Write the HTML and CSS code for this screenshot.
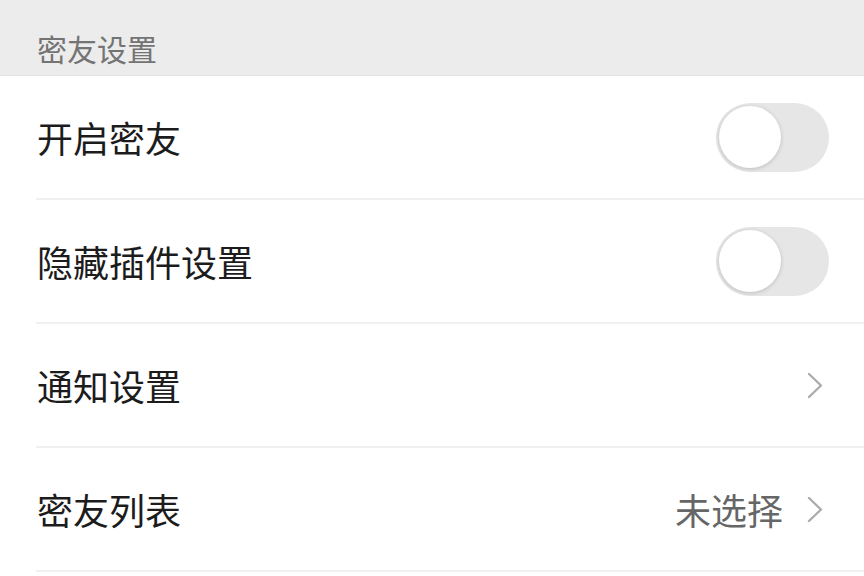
FILE: index.html
```html
<!DOCTYPE html>
<html lang="zh-CN">
<head>
  <meta charset="UTF-8" />
  <title>密友设置</title>
  <link rel="stylesheet" href="styles.css">
</head>
<body>
  <div class="section-title">密友设置</div>
  <div class="list">
    <div class="row">
      <span class="label">开启密友</span>
      <span class="switch"><span class="knob"></span></span>
    </div>
    <div class="row">
      <span class="label">隐藏插件设置</span>
      <span class="switch"><span class="knob"></span></span>
    </div>
    <div class="row">
      <span class="label">通知设置</span>
      <span class="extra">
        <svg class="chevron" viewBox="0 0 16 27" width="16" height="27"><path d="M2 2 L14 13.5 L2 25" fill="none" stroke="#acacac" stroke-width="2.4" stroke-linecap="round" stroke-linejoin="round"/></svg>
      </span>
    </div>
    <div class="row">
      <span class="label">密友列表</span>
      <span class="extra">
        <span class="value">未选择</span>
        <svg class="chevron" viewBox="0 0 16 27" width="16" height="27"><path d="M2 2 L14 13.5 L2 25" fill="none" stroke="#acacac" stroke-width="2.4" stroke-linecap="round" stroke-linejoin="round"/></svg>
      </span>
    </div>
  </div>
</body>
</html>
```

FILE: styles.css
```css
body {
  margin: 0;
  background: #ffffff;
  font-family: "Noto Sans CJK SC", "Noto Sans", sans-serif;
}

.section-title {
  height: 76px;
  box-sizing: border-box;
  background: #ececec;
  color: #747474;
  font-size: 30px;
  line-height: 30px;
  padding: 33px 0 0 37px;
  border-bottom: 1px solid #e2e2e2;
}

.list {
  padding-left: 36px;
}

.row {
  height: 122px;
  display: flex;
  align-items: center;
  justify-content: space-between;
  border-bottom: 2px solid #f0f0f0;
  padding-right: 35px;
}

.label {
  font-size: 36px;
  color: #1c1c1c;
  margin-left: 1px;
}

.switch {
  width: 113px;
  height: 69px;
  border-radius: 35px;
  background: #e6e6e6;
  display: flex;
  align-items: center;
  padding-left: 3px;
  box-sizing: border-box;
}

.knob {
  width: 62px;
  height: 62px;
  border-radius: 50%;
  background: #ffffff;
  box-shadow: 0 1px 4px rgba(0, 0, 0, 0.18);
}

.extra {
  display: flex;
  align-items: center;
  gap: 24px;
  padding-right: 6px;
}

.value {
  font-size: 36px;
  color: #666666;
}

.chevron {
  display: block;
}
```
